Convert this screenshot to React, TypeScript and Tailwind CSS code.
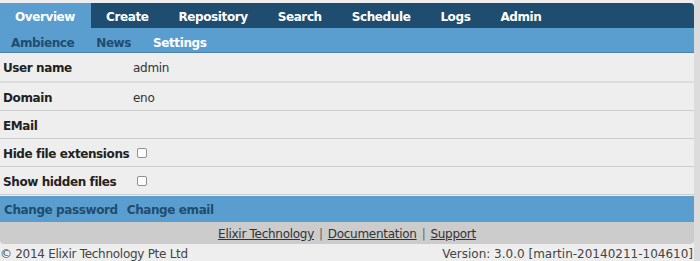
import React from 'react';

const tabs = ['Overview', 'Create', 'Repository', 'Search', 'Schedule', 'Logs', 'Admin'];
const subTabs = ['Ambience', 'News', 'Settings'];

const rows: { label: string; value?: string; check?: boolean }[] = [
  { label: 'User name', value: 'admin' },
  { label: 'Domain', value: 'eno' },
  { label: 'EMail' },
  { label: 'Hide file extensions', check: true },
  { label: 'Show hidden files', check: true },
];

export default function App() {
  return (
    <div className="flex w-[700px] h-[261px] bg-[#dcdcdc] font-['DejaVu_Sans',sans-serif] overflow-hidden">
      <div className="w-[694px] bg-[#eeeeee] flex flex-col">
        <div className="h-[3px]" />
        {/* main nav */}
        <div className="flex h-[25px] bg-[#1f4d6f] rounded-tr-[4px]">
          {tabs.map((t, i) => (
            <div
              key={t}
              className={
                i === 0
                  ? 'flex items-center pt-[3px] pl-[15px] pr-[16px] bg-[#5a9ecf] text-white text-[12px] tracking-[-0.4px] font-bold'
                  : 'flex items-center pt-[3px] px-[15px] text-white text-[12px] tracking-[-0.4px] font-bold'
              }
            >
              {t}
            </div>
          ))}
        </div>
        {/* sub nav */}
        <div className="flex h-[25px] bg-[#5a9ecf] border-b border-[#4a82ab]">
          {subTabs.map((t, i) => (
            <div
              key={t}
              className={
                i === 2
                  ? 'flex items-center pt-[5px] px-[11px] text-white text-[12px] tracking-[-0.4px] font-bold'
                  : 'flex items-center pt-[5px] px-[11px] text-[#1f4d6f] text-[12px] tracking-[-0.4px] font-bold'
              }
            >
              {t}
            </div>
          ))}
        </div>
        {/* settings rows */}
        <div className="flex flex-col">
          {rows.map((r, i) => (
            <div
              key={r.label}
              className={
                i === 0
                  ? 'flex items-center pt-[2px] h-[30px] border-b-2 border-[#dddddd] text-[12px] tracking-[-0.28px]'
                  : 'flex items-center pt-[2px] h-[28px] border-b border-[#cccccc] text-[12px] tracking-[-0.28px]'
              }
            >
              <div className="w-[133px] pl-[3px] font-bold tracking-[-0.4px] text-[#222222] whitespace-nowrap">{r.label}</div>
              {r.value && <div className="text-[#333333]">{r.value}</div>}
              {r.check && (
                <div className="w-[10px] h-[10px] ml-[4px] mb-[2px] border border-[#8f8f8f] rounded-[2px] bg-white" />
              )}
            </div>
          ))}
        </div>
        <div className="h-[1px]" />
        {/* action bar */}
        <div className="flex items-center pt-[2px] h-[26px] bg-[#5a9ecf] gap-[9px] pl-[4px] text-[12px] tracking-[-0.4px] font-bold text-[#1f4d6f]">
          <span>Change password</span>
          <span>Change email</span>
        </div>
        {/* footer links */}
        <div className="flex items-center justify-center pt-[2px] h-[22px] bg-[#cccccc] rounded-b-[4px] text-[12px] tracking-[-0.28px] text-[#333333] gap-[5px]">
          <span className="underline">Elixir Technology</span>
          <span className="text-[#666666]">|</span>
          <span className="underline">Documentation</span>
          <span className="text-[#666666]">|</span>
          <span className="underline">Support</span>
        </div>
        <div className="flex justify-between items-center pt-[2px] h-[17px] text-[12px] text-[#444444] pr-[1px]">
          <span className="tracking-[-0.28px]">© 2014 Elixir Technology Pte Ltd</span>
          <span>Version: 3.0.0 [martin-20140211-104610]</span>
        </div>
      </div>
    </div>
  );
}
